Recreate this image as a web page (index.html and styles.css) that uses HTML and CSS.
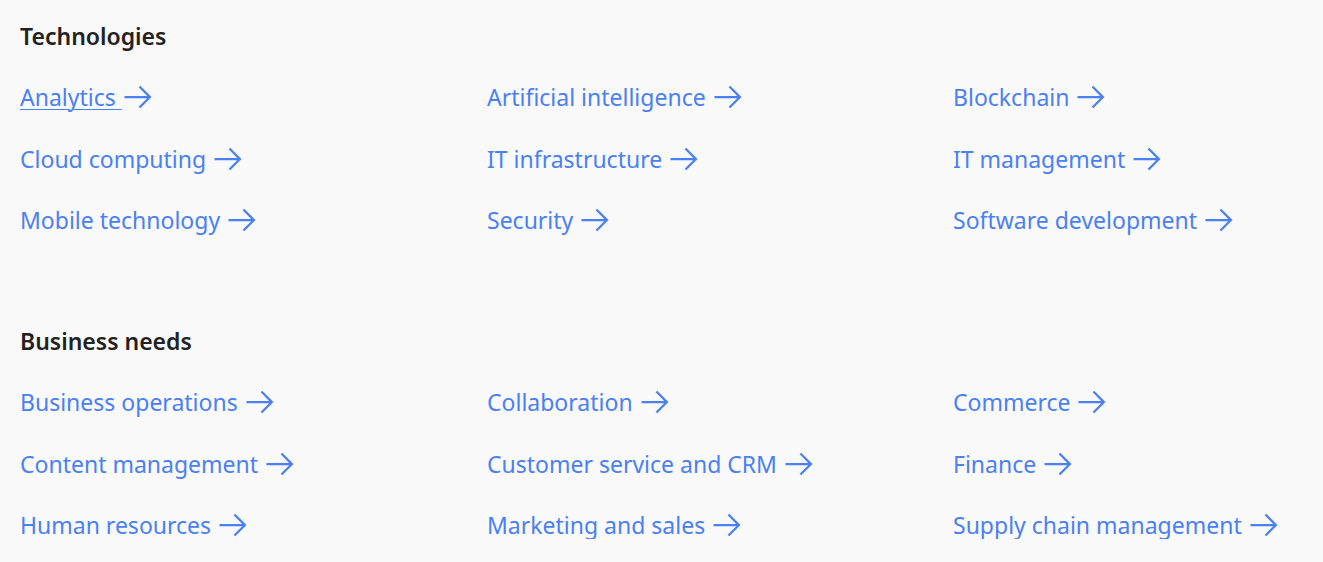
FILE: index.html
```html
<!DOCTYPE html>
<html lang="en">
<head>
<meta charset="utf-8">
<title>Topics</title>
<link rel="stylesheet" href="styles.css">
</head>
<body>
<main class="page">
  <section class="group">
    <h2 class="group-title">Technologies</h2>
    <ul class="links">
      <li><a class="link link-active" href="#"><span class="label">Analytics </span><svg class="arrow" viewBox="0 0 32 32"><path d="M18 6 16.57 7.393 24.15 15 4 15 4 17 24.15 17 16.57 24.573 18 26 28 16 18 6z"/></svg></a></li>
      <li><a class="link" href="#"><span class="label">Artificial intelligence </span><svg class="arrow" viewBox="0 0 32 32"><path d="M18 6 16.57 7.393 24.15 15 4 15 4 17 24.15 17 16.57 24.573 18 26 28 16 18 6z"/></svg></a></li>
      <li><a class="link" href="#"><span class="label">Blockchain </span><svg class="arrow" viewBox="0 0 32 32"><path d="M18 6 16.57 7.393 24.15 15 4 15 4 17 24.15 17 16.57 24.573 18 26 28 16 18 6z"/></svg></a></li>
      <li><a class="link" href="#"><span class="label">Cloud computing </span><svg class="arrow" viewBox="0 0 32 32"><path d="M18 6 16.57 7.393 24.15 15 4 15 4 17 24.15 17 16.57 24.573 18 26 28 16 18 6z"/></svg></a></li>
      <li><a class="link" href="#"><span class="label">IT infrastructure </span><svg class="arrow" viewBox="0 0 32 32"><path d="M18 6 16.57 7.393 24.15 15 4 15 4 17 24.15 17 16.57 24.573 18 26 28 16 18 6z"/></svg></a></li>
      <li><a class="link" href="#"><span class="label">IT management </span><svg class="arrow" viewBox="0 0 32 32"><path d="M18 6 16.57 7.393 24.15 15 4 15 4 17 24.15 17 16.57 24.573 18 26 28 16 18 6z"/></svg></a></li>
      <li><a class="link" href="#"><span class="label">Mobile technology </span><svg class="arrow" viewBox="0 0 32 32"><path d="M18 6 16.57 7.393 24.15 15 4 15 4 17 24.15 17 16.57 24.573 18 26 28 16 18 6z"/></svg></a></li>
      <li><a class="link" href="#"><span class="label">Security </span><svg class="arrow" viewBox="0 0 32 32"><path d="M18 6 16.57 7.393 24.15 15 4 15 4 17 24.15 17 16.57 24.573 18 26 28 16 18 6z"/></svg></a></li>
      <li><a class="link" href="#"><span class="label">Software development </span><svg class="arrow" viewBox="0 0 32 32"><path d="M18 6 16.57 7.393 24.15 15 4 15 4 17 24.15 17 16.57 24.573 18 26 28 16 18 6z"/></svg></a></li>
    </ul>
  </section>
  <section class="group">
    <h2 class="group-title">Business needs</h2>
    <ul class="links">
      <li><a class="link" href="#"><span class="label">Business operations </span><svg class="arrow" viewBox="0 0 32 32"><path d="M18 6 16.57 7.393 24.15 15 4 15 4 17 24.15 17 16.57 24.573 18 26 28 16 18 6z"/></svg></a></li>
      <li><a class="link" href="#"><span class="label">Collaboration </span><svg class="arrow" viewBox="0 0 32 32"><path d="M18 6 16.57 7.393 24.15 15 4 15 4 17 24.15 17 16.57 24.573 18 26 28 16 18 6z"/></svg></a></li>
      <li><a class="link" href="#"><span class="label">Commerce </span><svg class="arrow" viewBox="0 0 32 32"><path d="M18 6 16.57 7.393 24.15 15 4 15 4 17 24.15 17 16.57 24.573 18 26 28 16 18 6z"/></svg></a></li>
      <li><a class="link" href="#"><span class="label">Content management </span><svg class="arrow" viewBox="0 0 32 32"><path d="M18 6 16.57 7.393 24.15 15 4 15 4 17 24.15 17 16.57 24.573 18 26 28 16 18 6z"/></svg></a></li>
      <li><a class="link" href="#"><span class="label">Customer service and CRM </span><svg class="arrow" viewBox="0 0 32 32"><path d="M18 6 16.57 7.393 24.15 15 4 15 4 17 24.15 17 16.57 24.573 18 26 28 16 18 6z"/></svg></a></li>
      <li><a class="link" href="#"><span class="label">Finance </span><svg class="arrow" viewBox="0 0 32 32"><path d="M18 6 16.57 7.393 24.15 15 4 15 4 17 24.15 17 16.57 24.573 18 26 28 16 18 6z"/></svg></a></li>
      <li><a class="link" href="#"><span class="label">Human resources </span><svg class="arrow" viewBox="0 0 32 32"><path d="M18 6 16.57 7.393 24.15 15 4 15 4 17 24.15 17 16.57 24.573 18 26 28 16 18 6z"/></svg></a></li>
      <li><a class="link" href="#"><span class="label">Marketing and sales </span><svg class="arrow" viewBox="0 0 32 32"><path d="M18 6 16.57 7.393 24.15 15 4 15 4 17 24.15 17 16.57 24.573 18 26 28 16 18 6z"/></svg></a></li>
      <li><a class="link" href="#"><span class="label">Supply chain management </span><svg class="arrow" viewBox="0 0 32 32"><path d="M18 6 16.57 7.393 24.15 15 4 15 4 17 24.15 17 16.57 24.573 18 26 28 16 18 6z"/></svg></a></li>
    </ul>
  </section>
</main>
</body>
</html>
```

FILE: styles.css
```css
html, body {
  margin: 0;
  padding: 0;
  background: #f9f9f9;
}

body {
  font-family: "Noto Sans", "Open Sans", "Liberation Sans", sans-serif;
  color: #262626;
}

.page {
  padding: 22px 0 0 20px;
  display: flex;
  flex-direction: column;
  gap: 93px;
}

.group-title {
  margin: 0;
  font-size: 23px;
  line-height: 28px;
  font-weight: 600;
  color: #222222;
}

.links {
  list-style: none;
  margin: 33px 0 0 0;
  padding: 0;
  display: grid;
  grid-template-columns: 467px 466px 1fr;
  grid-auto-rows: 28px;
  row-gap: 33.5px;
}

.links li {
  display: flex;
  height: 28px;
}

.link {
  display: flex;
  align-items: center;
  height: 28px;
  font-size: 23px;
  line-height: 28px;
  color: #4a80f2;
  text-decoration: none;
  white-space: pre;
}

.link-active .label {
  text-decoration: underline;
  text-underline-offset: 3px;
  text-decoration-thickness: 1px;
}

.arrow {
  width: 36px;
  height: 36px;
  margin: -4px 0 -4px -2px;
  fill: #4a80f2;
  flex: none;
}
```
